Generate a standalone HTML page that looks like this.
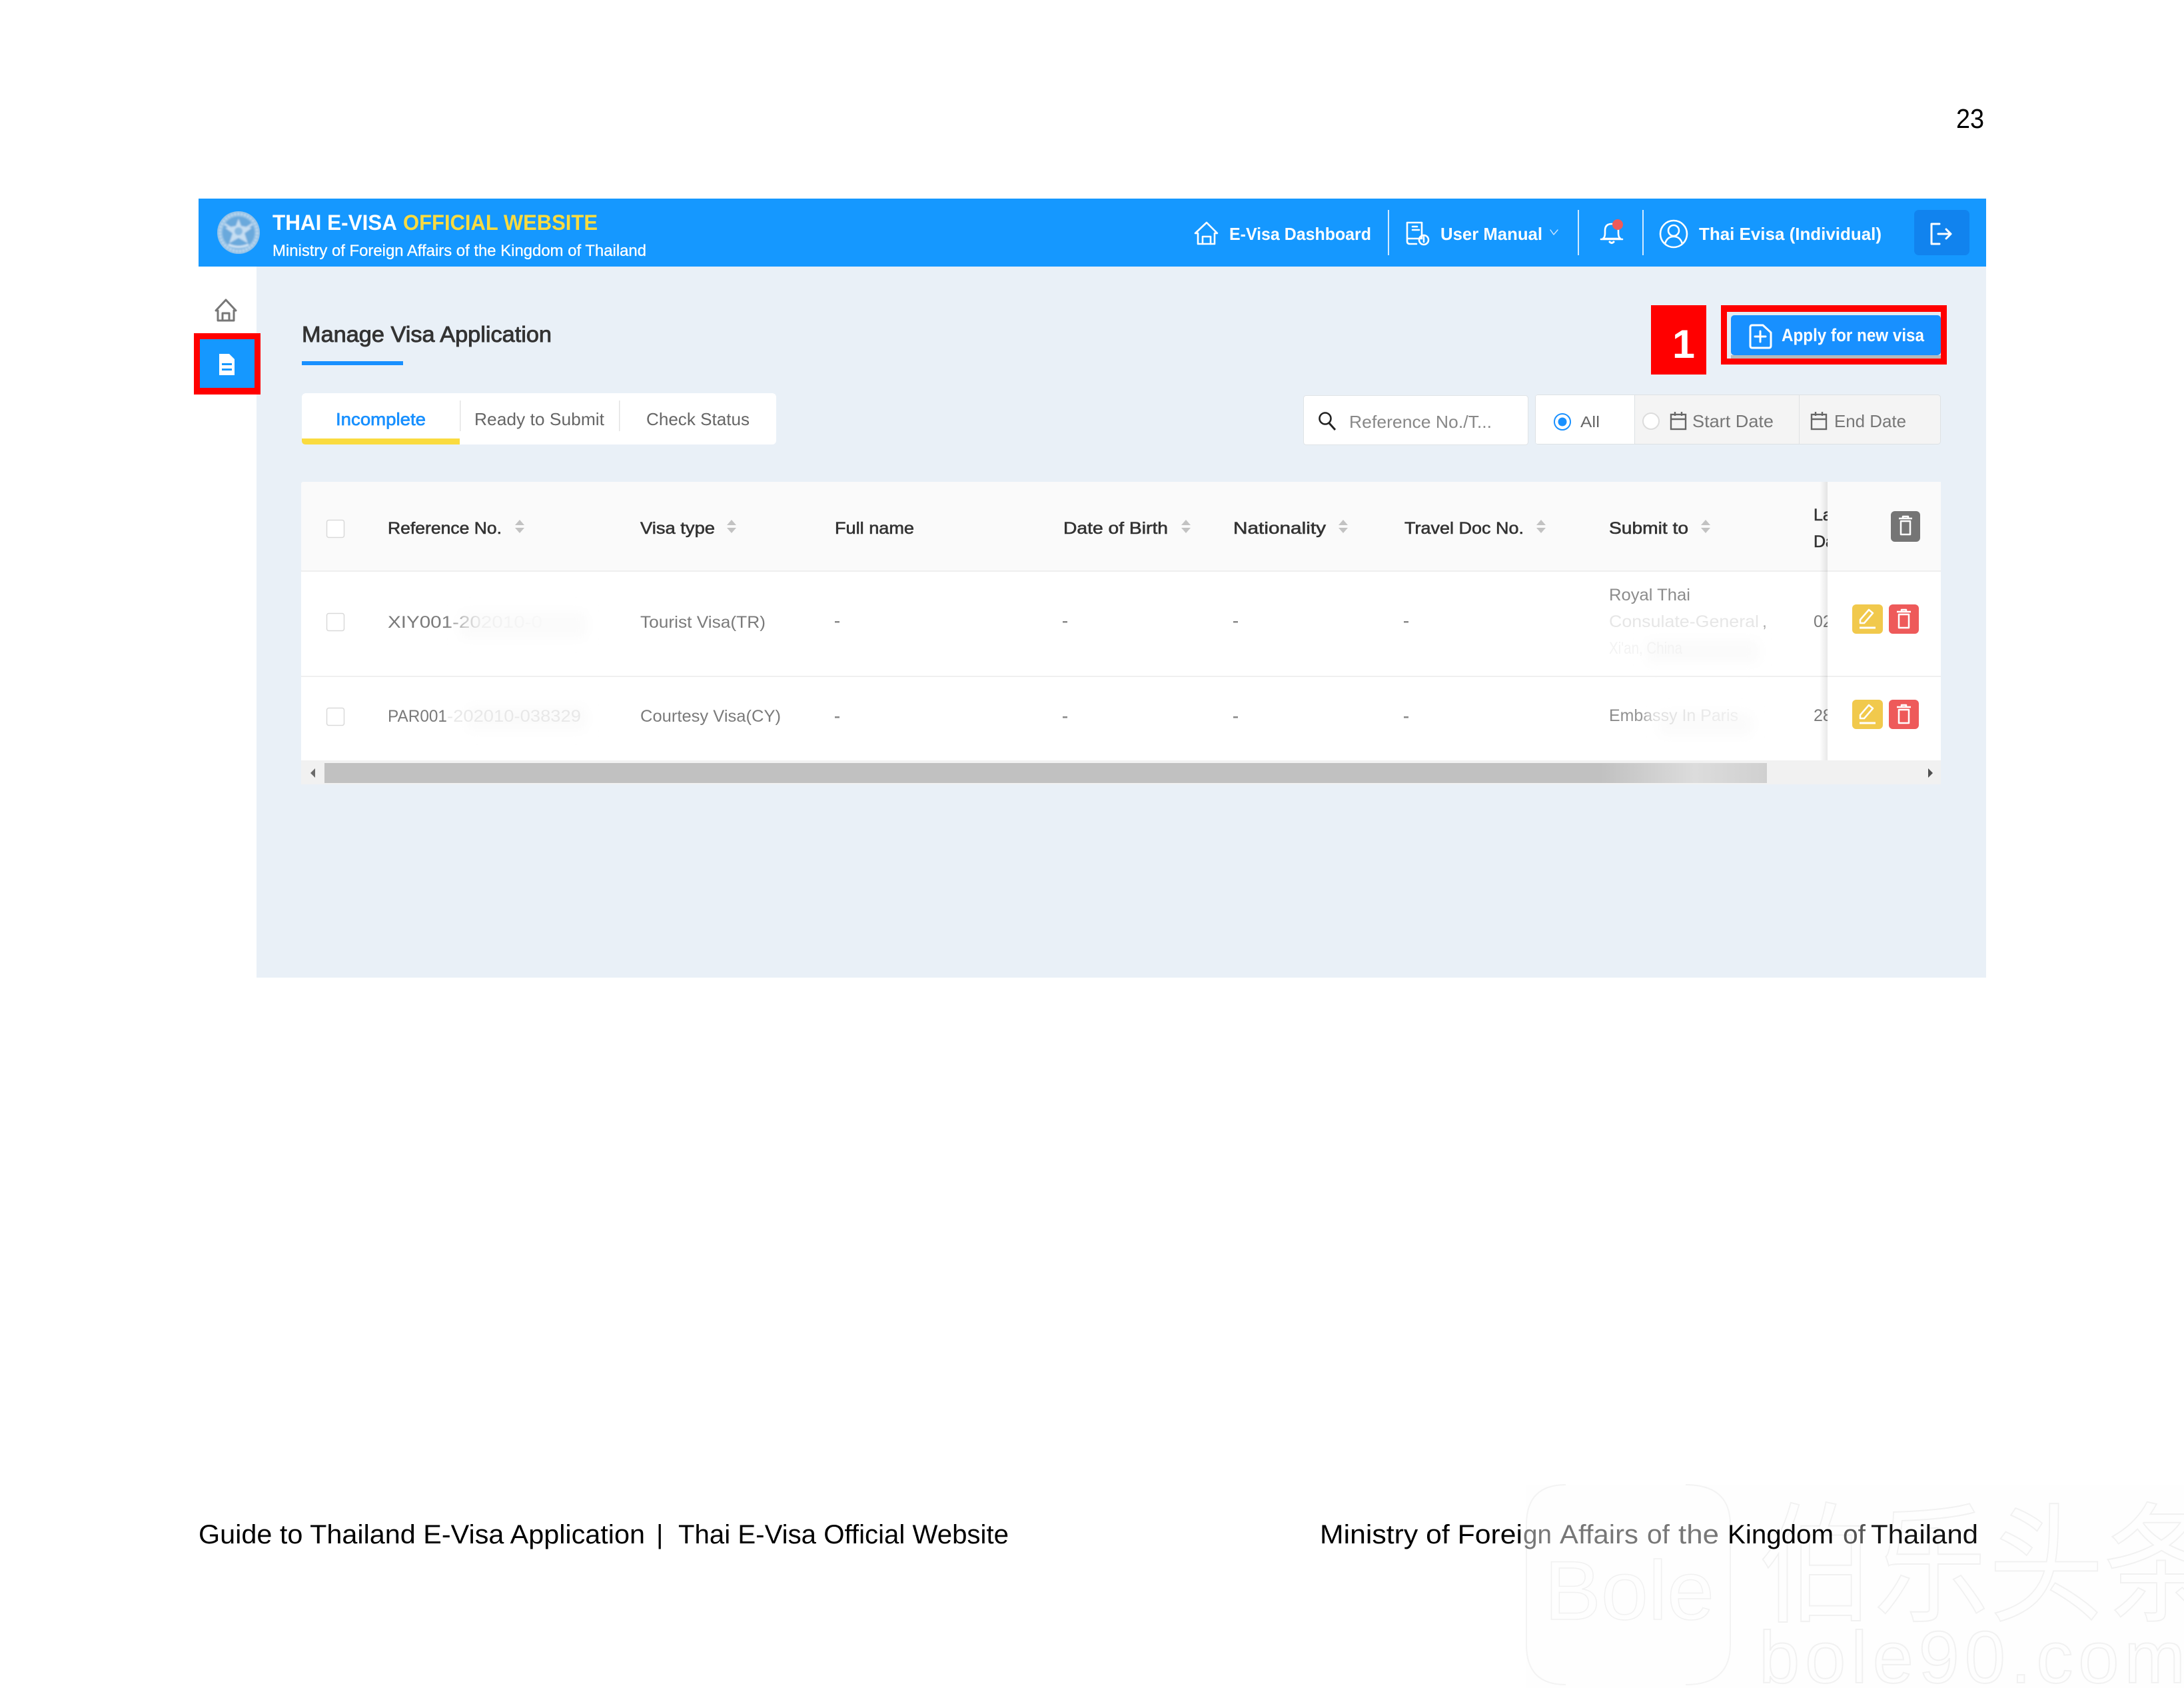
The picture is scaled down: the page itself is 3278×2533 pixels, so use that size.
<!DOCTYPE html>
<html lang="en">
<head>
<meta charset="utf-8">
<title>Manage Visa Application</title>
<style>
html,body{margin:0;padding:0;background:#fff;width:3278px;height:2533px;overflow:hidden}
svg{display:block}
text{font-family:"Liberation Sans",sans-serif;white-space:pre}
.b{font-weight:700}
.hd{font-size:25px;fill:#333}
.cell{font-size:25px;fill:#7a7a7a}
.wh{fill:#fff;font-size:26px;font-weight:700}
.ft{font-family:"Liberation Sans",sans-serif;font-size:40px;fill:#000}
</style>
</head>
<body>
<svg xmlns="http://www.w3.org/2000/svg" width="3278" height="2533" viewBox="0 0 3278 2533">
<defs>
<linearGradient id="fade" x1="0" x2="1" y1="0" y2="0">
<stop offset="0" stop-color="#c1c1c1"/><stop offset=".885" stop-color="#c1c1c1"/><stop offset=".95" stop-color="#dcdcdc"/><stop offset="1" stop-color="#d0d0d0"/>
</linearGradient>
<linearGradient id="shadow" x1="0" x2="1" y1="0" y2="0">
<stop offset="0" stop-color="#000" stop-opacity="0"/><stop offset="1" stop-color="#000" stop-opacity=".09"/>
</linearGradient>
<linearGradient id="ref1" x1="0" x2="1" y1="0" y2="0">
<stop offset="0" stop-color="#7a7a7a"/><stop offset=".37" stop-color="#7a7a7a"/><stop offset=".5" stop-color="#c8c8c8"/><stop offset=".62" stop-color="#f0f0f0"/><stop offset="1" stop-color="#f8f8f8"/>
</linearGradient>
<linearGradient id="emb" x1="0" x2="1" y1="0" y2="0">
<stop offset="0" stop-color="#888"/><stop offset=".25" stop-color="#999"/><stop offset=".36" stop-color="#e0e0e0"/><stop offset="1" stop-color="#f0f0f0"/>
</linearGradient>
<filter id="bl" x="-20%" y="-50%" width="140%" height="200%"><feGaussianBlur stdDeviation="9"/></filter>
<filter id="bl2" x="-20%" y="-50%" width="140%" height="200%"><feGaussianBlur stdDeviation="1.200"/></filter>
</defs>

<rect width="3278" height="2533" fill="#fff"/>

<!-- page number -->
<text x="2936" y="192" font-size="41" fill="#000" textLength="42" lengthAdjust="spacingAndGlyphs">23</text>

<!-- content background -->
<rect x="385" y="400" width="2596" height="1067" fill="#e9f0f7"/>

<!-- header -->
<rect x="298" y="298" width="2683" height="102" fill="#1598ff"/>
<circle cx="358" cy="349" r="32" fill="#8fbfe6"/>
<g filter="url(#bl2)">
<circle cx="358" cy="349" r="28" fill="none" stroke="#c4dbef" stroke-width="4" stroke-dasharray="3 2"/>
<circle cx="358" cy="349" r="24" fill="#6aa9dc"/>
<path d="M358 328l4 11 16 3-11 8 5 15-14-8-14 8 5-15-11-8 16-3z" fill="#c6def2"/>
<circle cx="358" cy="347" r="6" fill="#87b9e2"/>
<path d="M343 367q15 7 30 0" fill="none" stroke="#d7e8f6" stroke-width="3"/>
<path d="M337 336l9 6M379 336l-9 6" stroke="#c6def2" stroke-width="3"/>
</g>
<text x="409" y="345" class="b" font-size="32" fill="#fff" textLength="187" lengthAdjust="spacingAndGlyphs">THAI E-VISA</text>
<text x="605" y="345" class="b" font-size="32" fill="#fadb3f" textLength="292" lengthAdjust="spacingAndGlyphs">OFFICIAL WEBSITE</text>
<text x="409" y="384" font-size="24" fill="#fff" textLength="561" lengthAdjust="spacingAndGlyphs" style="stroke:#fff;stroke-width:.3">Ministry of Foreign Affairs of the Kingdom of Thailand</text>

<!-- nav -->
<g fill="none" stroke="#fff" stroke-width="2.600" stroke-linejoin="round" stroke-linecap="round">
<path d="M1794 350l17-16 16 16h-4v16h-25v-16z"/>
<path d="M1805 366v-11h12v11"/>
<path d="M2112 334h22v24h-12M2112 334v28q0 4 4 4h10M2112 358h9"/>
<path d="M2120 340h7M2120 345h10"/>
<circle cx="2137" cy="360" r="7"/>
<path d="M2137 358v5M2137 355.500v.1"/>
<path d="M2327 345l5 7 6-7" stroke-width="1.400" stroke="#cfe6ff"/>
<path d="M2406 358q3-2 3-8v-4q0-10 10-10t10 10v4q0 6 3 8z"/>
<path d="M2403 359h32"/>
<path d="M2416 363q3 3 6 0" stroke-width="3"/>
<circle cx="2512" cy="351" r="20"/>
<circle cx="2512" cy="346" r="8"/>
<path d="M2499 366q3-11 13-11t13 11"/>
<path d="M2915 335h-15v31h15" stroke-width="3"/>
</g>
<circle cx="2428" cy="337" r="8" fill="#ef5a5a"/>
<text x="1845" y="360" class="wh" textLength="213" lengthAdjust="spacingAndGlyphs">E-Visa Dashboard</text>
<rect x="2083" y="315" width="2" height="68" fill="#d3eaff"/>
<text x="2162" y="360" class="wh" textLength="153" lengthAdjust="spacingAndGlyphs">User Manual</text>
<rect x="2368" y="315" width="2" height="68" fill="#d3eaff"/>
<rect x="2465" y="315" width="2" height="68" fill="#d3eaff"/>
<text x="2550" y="360" class="wh" textLength="274" lengthAdjust="spacingAndGlyphs">Thai Evisa (Individual)</text>
<rect x="2873" y="315" width="83" height="68" rx="7" fill="#1183ee"/>
<g fill="none" stroke="#fff" stroke-width="3" stroke-linecap="round" stroke-linejoin="round">
<path d="M2911 336h-12v30h12"/>
<path d="M2909 351h19M2921 344l7 7-7 7"/>
</g>

<!-- sidebar -->
<g fill="none" stroke="#777" stroke-width="3" stroke-linejoin="round">
<path d="M324 466l15-16 15 16h-3v15h-24v-15z"/>
<path d="M334 481v-11h10v11"/>
</g>
<rect x="291" y="500" width="100" height="92" fill="#f00"/>
<rect x="300" y="509" width="82" height="73" fill="#1598ff"/>
<path d="M329 531h15l8 8v24h-23z" fill="#fff"/>
<rect x="333" y="545" width="15" height="3" fill="#1598ff"/>
<rect x="333" y="553" width="15" height="3" fill="#1598ff"/>

<!-- title -->
<text x="453" y="513" font-size="33" fill="#333" textLength="375" lengthAdjust="spacingAndGlyphs" style="stroke:#333;stroke-width:.9">Manage Visa Application</text>
<rect x="453" y="542" width="152" height="6" fill="#1890ff"/>

<!-- tabs -->
<rect x="453" y="590" width="712" height="77" rx="6" fill="#fff"/>
<path d="M453 658h237v9h-231q-6 0-6-6z" fill="#fadb3f"/>
<rect x="690" y="601" width="1.500" height="46" fill="#e3e3e3"/>
<rect x="929" y="601" width="1.500" height="46" fill="#e3e3e3"/>
<text x="504" y="638" font-size="26" fill="#1890ff" textLength="135" lengthAdjust="spacingAndGlyphs" style="stroke:#1890ff;stroke-width:.7">Incomplete</text>
<text x="712" y="638" font-size="26" fill="#666" textLength="195" lengthAdjust="spacingAndGlyphs">Ready to Submit</text>
<text x="970" y="638" font-size="26" fill="#666" textLength="155" lengthAdjust="spacingAndGlyphs">Check Status</text>

<!-- number badge & button -->
<rect x="2478" y="458" width="83" height="104" fill="#f00"/>
<text x="2510" y="537" font-size="60" class="b" fill="#fff" textLength="34" lengthAdjust="spacingAndGlyphs">1</text>
<rect x="2583" y="458" width="339" height="89" fill="#f00"/>
<rect x="2592" y="468" width="321" height="70" fill="#e4ebf1"/>
<rect x="2598" y="533" width="315" height="5" fill="#b4b9bd"/>
<rect x="2598" y="473" width="315" height="60" rx="5" fill="#1890ff"/>
<g fill="none" stroke="#fff" stroke-width="3" stroke-linejoin="round" stroke-linecap="round">
<path d="M2630 488h16l12 11v20q0 3-3 3h-25q-3 0-3-3v-28q0-3 3-3z"/>
<path d="M2642 497v16M2634 505h16"/>
</g>
<text x="2674" y="512" class="wh" textLength="214" lengthAdjust="spacingAndGlyphs" style="font-size:27px">Apply for new visa</text>

<!-- search and filter -->
<rect x="1956.500" y="593.500" width="337" height="74" rx="4" fill="#fff" stroke="#dfe3e6"/>
<circle cx="1989" cy="628" r="8.500" fill="none" stroke="#222" stroke-width="2.600"/>
<path d="M1995 635l9 10" stroke="#222" stroke-width="3"/>
<text x="2025" y="642" font-size="26" fill="#888" textLength="214" lengthAdjust="spacingAndGlyphs">Reference No./T...</text>
<rect x="2304.500" y="592.500" width="608" height="74" rx="4" fill="#f4f4f4" stroke="#dde1e4"/>
<path d="M2308 593h145v73h-145q-3 0-3-3v-67q0-3 3-3z" fill="#fff"/>
<rect x="2453" y="593" width="1" height="73" fill="#dde1e4"/>
<rect x="2700" y="593" width="1" height="73" fill="#dfe1e3"/>
<circle cx="2345" cy="633" r="12" fill="#fff" stroke="#1890ff" stroke-width="2"/>
<circle cx="2345" cy="633" r="6.500" fill="#1890ff"/>
<text x="2372" y="641" font-size="23" fill="#666" textLength="29" lengthAdjust="spacingAndGlyphs">All</text>
<circle cx="2478" cy="632" r="12" fill="#fff" stroke="#dcdcdc" stroke-width="2"/>
<g fill="none" stroke="#666" stroke-width="2.400">
<rect x="2508" y="622" width="22" height="22"/><path d="M2508 629h22M2514 618v6M2524 618v6"/>
<rect x="2719" y="622" width="22" height="22"/><path d="M2719 629h22M2725 618v6M2735 618v6"/>
</g>
<text x="2540" y="641" font-size="26" fill="#777" textLength="122" lengthAdjust="spacingAndGlyphs">Start Date</text>
<text x="2753" y="641" font-size="26" fill="#777" textLength="108" lengthAdjust="spacingAndGlyphs">End Date</text>

<!-- table -->
<rect x="452" y="723" width="2461" height="134" rx="3" fill="#fafafa"/>
<rect x="452" y="857" width="2461" height="284" fill="#fff"/>
<rect x="452" y="856" width="2461" height="2" fill="#efefef"/>
<rect x="452" y="1014" width="2461" height="2" fill="#efefef"/>

<g fill="#fff" stroke="#d9d9d9" stroke-width="1.500">
<rect x="490.500" y="780.500" width="26" height="26" rx="3"/>
<rect x="490.500" y="920.500" width="26" height="26" rx="3"/>
<rect x="490.500" y="1062.500" width="26" height="26" rx="3"/>
</g>

<g style="stroke:#333;stroke-width:.6">
<text x="582" y="801" class="hd" textLength="171" lengthAdjust="spacingAndGlyphs">Reference No.</text>
<text x="961" y="801" class="hd" textLength="112" lengthAdjust="spacingAndGlyphs">Visa type</text>
<text x="1253" y="801" class="hd" textLength="119" lengthAdjust="spacingAndGlyphs">Full name</text>
<text x="1596" y="801" class="hd" textLength="157" lengthAdjust="spacingAndGlyphs">Date of Birth</text>
<text x="1851" y="801" class="hd" textLength="139" lengthAdjust="spacingAndGlyphs">Nationality</text>
<text x="2108" y="801" class="hd" textLength="179" lengthAdjust="spacingAndGlyphs">Travel Doc No.</text>
<text x="2415" y="801" class="hd" textLength="119" lengthAdjust="spacingAndGlyphs">Submit to</text>
<text x="2722" y="781" class="hd">La</text>
<text x="2722" y="821" class="hd">Da</text>
</g>
<g fill="#c2c2c2">
<path d="M773 788l7-8 7 8zM773 792l7 8 7-8z"/>
<path d="M1091 788l7-8 7 8zM1091 792l7 8 7-8z"/>
<path d="M1773 788l7-8 7 8zM1773 792l7 8 7-8z"/>
<path d="M2009 788l7-8 7 8zM2009 792l7 8 7-8z"/>
<path d="M2306 788l7-8 7 8zM2306 792l7 8 7-8z"/>
<path d="M2553 788l7-8 7 8zM2553 792l7 8 7-8z"/>
</g>

<!-- watermark smudges over rows -->
<g filter="url(#bl)" fill="#fbfbfb">
<rect x="690" y="918" width="190" height="40"/>
<rect x="700" y="1060" width="180" height="36"/>
<rect x="2470" y="960" width="170" height="36"/>
<rect x="2490" y="1070" width="140" height="34"/>
</g>

<!-- rows -->
<text x="582" y="942" class="cell" style="fill:url(#ref1)" textLength="232" lengthAdjust="spacingAndGlyphs">XIY001-202010-0</text>
<text x="961" y="942" class="cell" textLength="188" lengthAdjust="spacingAndGlyphs">Tourist Visa(TR)</text>
<text x="582" y="1083" class="cell" textLength="89" lengthAdjust="spacingAndGlyphs">PAR001</text>
<text x="671" y="1083" class="cell" style="fill:#e8e8e8" textLength="201" lengthAdjust="spacingAndGlyphs">-202010-038329</text>
<text x="961" y="1083" class="cell" textLength="211" lengthAdjust="spacingAndGlyphs">Courtesy Visa(CY)</text>
<g>
<rect x="1253" y="932" width="7" height="2.500" fill="#888"/>
<rect x="1595" y="932" width="7" height="2.500" fill="#888"/>
<rect x="1851" y="932" width="7" height="2.500" fill="#888"/>
<rect x="2107" y="932" width="7" height="2.500" fill="#888"/>
<rect x="1253" y="1075" width="7" height="2.500" fill="#888"/>
<rect x="1595" y="1075" width="7" height="2.500" fill="#888"/>
<rect x="1851" y="1075" width="7" height="2.500" fill="#888"/>
<rect x="2107" y="1075" width="7" height="2.500" fill="#888"/>
</g>
<text x="2415" y="901" class="cell" style="fill:#8c8c8c" textLength="122" lengthAdjust="spacingAndGlyphs">Royal Thai</text>
<text x="2415" y="941" class="cell" style="fill:#e6e6e6" textLength="225" lengthAdjust="spacingAndGlyphs">Consulate-General</text>
<text x="2645" y="941" class="cell" style="fill:#aaa">,</text>
<text x="2415" y="981" class="cell" style="fill:#f3f3f3" textLength="110" lengthAdjust="spacingAndGlyphs">Xi'an, China</text>
<text x="2415" y="1082" class="cell" style="fill:url(#emb)" textLength="194" lengthAdjust="spacingAndGlyphs">Embassy In Paris</text>
<text x="2722" y="941" class="cell">02</text>
<text x="2722" y="1082" class="cell">28</text>

<!-- fixed column -->
<rect x="2731" y="723" width="12" height="418" fill="url(#shadow)"/>
<rect x="2743" y="723" width="170" height="133" fill="#fafafa"/>
<rect x="2743" y="858" width="170" height="156" fill="#fff"/>
<rect x="2743" y="1016" width="170" height="125" fill="#fff"/>

<rect x="2838" y="767" width="44" height="46" rx="6" fill="#757575"/>
<rect x="2780" y="907" width="46" height="44" rx="6" fill="#f1c94c"/>
<rect x="2835" y="907" width="45" height="44" rx="6" fill="#ee5a5a"/>
<rect x="2780" y="1050" width="46" height="44" rx="6" fill="#f1c94c"/>
<rect x="2835" y="1050" width="45" height="44" rx="6" fill="#ee5a5a"/>
<g fill="none" stroke="#fff" stroke-width="2.500" stroke-linejoin="round">
<path d="M2850 778h20M2856 778v-3h8v3M2853 782h14v20h-14z"/>
<path d="M2847 918h21M2854 918v-3h7v3M2850 922h15v20h-15z"/>
<path d="M2847 1061h21M2854 1061v-3h7v3M2850 1065h15v20h-15z"/>
<path d="M2792 930l13-15 6 5-13 15h-6z"/>
<path d="M2791 942h24" stroke-width="3"/>
<path d="M2792 1073l13-15 6 5-13 15h-6z"/>
<path d="M2791 1085h24" stroke-width="3"/>
</g>

<!-- scrollbar -->
<rect x="452" y="1141" width="2461" height="36" fill="#f1f1f1"/>
<rect x="487" y="1145" width="2165" height="30" fill="url(#fade)"/>
<path d="M466 1160l7-7v14z" fill="#6a6a6a"/>
<path d="M2901 1160l-7-7v14z" fill="#505050"/>

<!-- watermark -->
<rect x="2291" y="2228" width="987" height="305" fill="#fefefe"/>
<g fill="none" stroke="#f3f3f3" stroke-width="2">
<path d="M2291 2288v180M2350 2228q-59 0-59 60M2291 2468q0 60 59 60M2530 2228q67 0 67 60v180q0 60-67 60"/>
<text x="2318" y="2430" font-size="125" style="fill:none;stroke:#f1f1f1;stroke-width:1.500" textLength="255" lengthAdjust="spacingAndGlyphs">Bole</text>
<text x="2640" y="2418" font-size="195" style="font-family:'Liberation Sans','Noto Sans CJK SC',sans-serif;fill:none;stroke:#f1f1f1;stroke-width:2" textLength="690" lengthAdjust="spacingAndGlyphs">伯乐头条</text>
<text x="2640" y="2525" font-size="110" style="fill:none;stroke:#f1f1f1;stroke-width:2" textLength="640" lengthAdjust="spacing">bole90.com</text>
</g>

<!-- footer -->
<text x="298" y="2316" class="ft" textLength="670" lengthAdjust="spacingAndGlyphs">Guide to Thailand E-Visa Application</text>
<text x="985" y="2316" class="ft">|</text>
<text x="1018" y="2316" class="ft" textLength="496" lengthAdjust="spacingAndGlyphs">Thai E-Visa Official Website</text>
<text x="1981" y="2316" class="ft" textLength="304" lengthAdjust="spacingAndGlyphs">Ministry of Forei</text>
<text x="2286" y="2316" class="ft" style="fill:#777" textLength="43" lengthAdjust="spacingAndGlyphs">gn</text>
<text x="2341" y="2316" class="ft" style="fill:#777" textLength="118" lengthAdjust="spacingAndGlyphs">Affairs</text>
<text x="2472" y="2316" class="ft" style="fill:#777" textLength="34" lengthAdjust="spacingAndGlyphs">of</text>
<text x="2519" y="2316" class="ft" style="fill:#777" textLength="61" lengthAdjust="spacingAndGlyphs">the</text>
<text x="2593" y="2316" class="ft" textLength="159" lengthAdjust="spacingAndGlyphs">Kingdom</text>
<text x="2766" y="2316" class="ft" style="fill:#555" textLength="34" lengthAdjust="spacingAndGlyphs">of</text>
<text x="2808" y="2316" class="ft" style="fill:#111" textLength="161" lengthAdjust="spacingAndGlyphs">Thailand</text>
</svg>
</body>
</html>
